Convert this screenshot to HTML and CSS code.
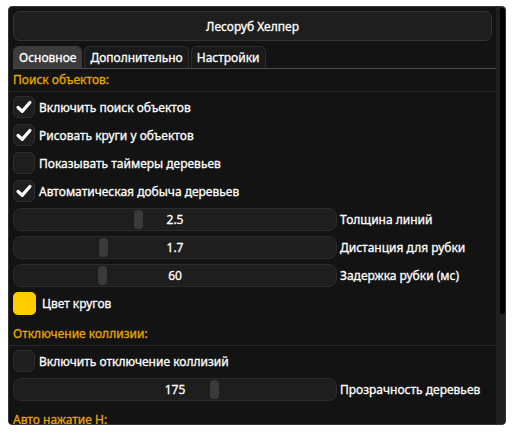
FILE: index.html
```html
<!DOCTYPE html>
<html lang="ru">
<head>
<meta charset="utf-8">
<link rel="stylesheet" href="styles.css">
</head>
<body>
<div class="window">
  <div class="content">
    <div class="title">Лесоруб Хелпер</div>
    <div class="tabs">
      <div class="tab active">Основное</div>
      <div class="tab">Дополнительно</div>
      <div class="tab">Настройки</div>
    </div>
    <div class="heading first">Поиск объектов:</div>
    <div class="sep"></div>
    <div class="rows">
      <div class="row"><span class="box"><svg viewBox="0 0 22 22" class="check"><path d="M4.5 11.5 L9 15.8 L17.5 6" /></svg></span><span class="lbl">Включить поиск объектов</span></div>
      <div class="row"><span class="box"><svg viewBox="0 0 22 22" class="check"><path d="M4.5 11.5 L9 15.8 L17.5 6" /></svg></span><span class="lbl">Рисовать круги у объектов</span></div>
      <div class="row"><span class="box"></span><span class="lbl">Показывать таймеры деревьев</span></div>
      <div class="row"><span class="box"><svg viewBox="0 0 22 22" class="check"><path d="M4.5 11.5 L9 15.8 L17.5 6" /></svg></span><span class="lbl">Автоматическая добыча деревьев</span></div>
      <div class="row"><div class="slider"><span class="thumb" style="left:120px"></span><span class="val">2.5</span></div><span class="slbl">Толщина линий</span></div>
      <div class="row"><div class="slider"><span class="thumb" style="left:85px"></span><span class="val">1.7</span></div><span class="slbl">Дистанция для рубки</span></div>
      <div class="row"><div class="slider"><span class="thumb" style="left:84px"></span><span class="val">60</span></div><span class="slbl">Задержка рубки (мс)</span></div>
      <div class="row"><span class="swatch"></span><span class="clbl">Цвет кругов</span></div>
    </div>
    <div class="heading">Отключение коллизии:</div>
    <div class="sep"></div>
    <div class="rows">
      <div class="row"><span class="box"></span><span class="lbl">Включить отключение коллизий</span></div>
      <div class="row"><div class="slider"><span class="thumb" style="left:196px"></span><span class="val">175</span></div><span class="slbl">Прозрачность деревьев</span></div>
    </div>
    <div class="heading">Авто нажатие H:</div>
  </div>
  <div class="scrollbar"><div class="sthumb"></div></div>
</div>
</body>
</html>
```
FILE: styles.css
```css
html, body {
  margin: 0;
  padding: 0;
  background: #ffffff;
}
body {
  font-family: "Noto Sans", "Open Sans", sans-serif;
  font-size: 12px;
  font-weight: 450;
  -webkit-text-stroke: 0.3px currentColor;
  color: #ffffff;
}
.window {
  margin: 6px 0 0 8px;
  width: 498px;
  height: 419px;
  box-sizing: border-box;
  border: 1px solid #3a3333;
  border-radius: 4px;
  background: #131313;
  overflow: hidden;
  display: flex;
}
.content {
  flex: 1;
  min-width: 0;
  padding-top: 4px;
}
.title {
  margin: 0 4px 0 4px;
  height: 30px;
  box-sizing: border-box;
  border: 1px solid #333333;
  border-radius: 7px;
  background: #1e1e1e;
  display: flex;
  align-items: center;
  justify-content: center;
}
.tabs {
  margin: 5px 0 0 4px;
  display: flex;
  gap: 2px;
  border-bottom: 1px solid #4a4a4a;
  height: 23px;
  box-sizing: border-box;
}
.tab {
  padding: 0 5px;
  height: 22px;
  box-sizing: border-box;
  display: flex;
  align-items: center;
  border: 1px solid #2e2e2e;
  border-bottom: none;
  border-radius: 6px 6px 0 0;
  background: #1a1a1a;
}
.tab.active {
  background: #3c3c3c;
  border-color: #3c3c3c;
}
.heading {
  height: 22px;
  line-height: 22px;
  padding-left: 4px;
  color: #e6a700;
  margin-top: 9px;
}
.heading.first {
  margin-top: 0;
}
.sep {
  height: 1px;
  background: #2a2a2a;
}
.rows {
  display: flex;
  flex-direction: column;
  gap: 6px;
  margin-top: 4px;
  padding-left: 4px;
}
.row {
  display: flex;
  align-items: center;
  height: 22px;
}
.box {
  width: 22px;
  height: 22px;
  box-sizing: border-box;
  border: 1px solid #2f2f2f;
  border-radius: 6px;
  background: #1e1e1e;
  display: flex;
  align-items: center;
  justify-content: center;
}
.check {
  width: 22px;
  height: 22px;
  fill: none;
  stroke: #ffffff;
  stroke-width: 3.6;
  stroke-linecap: round;
  stroke-linejoin: round;
}
.lbl {
  margin-left: 4px;
}
.slider {
  position: relative;
  width: 324px;
  height: 23px;
  box-sizing: border-box;
  border: 1px solid #2c2c2c;
  border-radius: 8px;
  background: #1e1e1e;
  display: flex;
  align-items: center;
  justify-content: center;
}
.thumb {
  position: absolute;
  top: 1px;
  width: 9px;
  height: 19px;
  border-radius: 4px;
  background: #3a3a3a;
}
.val {
  position: relative;
}
.slbl {
  margin-left: 3px;
}
.swatch {
  width: 23px;
  height: 23px;
  border-radius: 5px;
  background: #ffcc00;
}
.clbl {
  margin-left: 6px;
}
.scrollbar {
  width: 9px;
  background: #1f1f1f;
  display: flex;
  justify-content: flex-end;
}
.sthumb {
  width: 5px;
  height: 306px;
  margin-top: 1px;
  background: #000000;
  border-radius: 3px;
}
```
